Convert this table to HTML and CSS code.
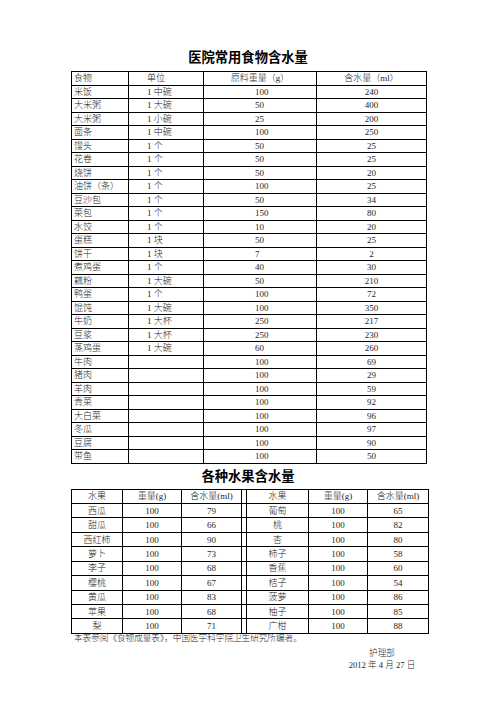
FILE: index.html
```html
<!DOCTYPE html>
<html lang="zh">
<head>
<meta charset="utf-8">
<link rel="stylesheet" href="styles.css">
</head>
<body>
<div class="page">
  <h1 class="title t1">医院常用食物含水量</h1>
  <table class="food">
    <colgroup><col class="c1"><col class="c2"><col class="c3"><col class="c4"></colgroup>
    <tr class="head"><td>食物</td><td class="unit">单位</td><td class="ctr">原料重量（g）</td><td class="ctr">含水量（ml）</td></tr>
    <tr><td>米饭</td><td class="unit">1 中碗</td><td class="raw">100</td><td class="ctr">240</td></tr>
    <tr><td>大米粥</td><td class="unit">1 大碗</td><td class="raw">50</td><td class="ctr">400</td></tr>
    <tr><td>大米粥</td><td class="unit">1 小碗</td><td class="raw">25</td><td class="ctr">200</td></tr>
    <tr><td>面条</td><td class="unit">1 中碗</td><td class="raw">100</td><td class="ctr">250</td></tr>
    <tr><td>馒头</td><td class="unit">1 个</td><td class="raw">50</td><td class="ctr">25</td></tr>
    <tr><td>花卷</td><td class="unit">1 个</td><td class="raw">50</td><td class="ctr">25</td></tr>
    <tr><td>烧饼</td><td class="unit">1 个</td><td class="raw">50</td><td class="ctr">20</td></tr>
    <tr><td>油饼（条）</td><td class="unit">1 个</td><td class="raw">100</td><td class="ctr">25</td></tr>
    <tr><td>豆沙包</td><td class="unit">1 个</td><td class="raw">50</td><td class="ctr">34</td></tr>
    <tr><td>菜包</td><td class="unit">1 个</td><td class="raw">150</td><td class="ctr">80</td></tr>
    <tr><td>水饺</td><td class="unit">1 个</td><td class="raw">10</td><td class="ctr">20</td></tr>
    <tr><td>蛋糕</td><td class="unit">1 块</td><td class="raw">50</td><td class="ctr">25</td></tr>
    <tr><td>饼干</td><td class="unit">1 块</td><td class="raw">7</td><td class="ctr">2</td></tr>
    <tr><td>煮鸡蛋</td><td class="unit">1 个</td><td class="raw">40</td><td class="ctr">30</td></tr>
    <tr><td>藕粉</td><td class="unit">1 大碗</td><td class="raw">50</td><td class="ctr">210</td></tr>
    <tr><td>鸭蛋</td><td class="unit">1 个</td><td class="raw">100</td><td class="ctr">72</td></tr>
    <tr><td>馄饨</td><td class="unit">1 大碗</td><td class="raw">100</td><td class="ctr">350</td></tr>
    <tr><td>牛奶</td><td class="unit">1 大杯</td><td class="raw">250</td><td class="ctr">217</td></tr>
    <tr><td>豆浆</td><td class="unit">1 大杯</td><td class="raw">250</td><td class="ctr">230</td></tr>
    <tr><td>蒸鸡蛋</td><td class="unit">1 大碗</td><td class="raw">60</td><td class="ctr">260</td></tr>
    <tr><td>牛肉</td><td class="unit"></td><td class="raw">100</td><td class="ctr">69</td></tr>
    <tr><td>猪肉</td><td class="unit"></td><td class="raw">100</td><td class="ctr">29</td></tr>
    <tr><td>羊肉</td><td class="unit"></td><td class="raw">100</td><td class="ctr">59</td></tr>
    <tr><td>青菜</td><td class="unit"></td><td class="raw">100</td><td class="ctr">92</td></tr>
    <tr><td>大白菜</td><td class="unit"></td><td class="raw">100</td><td class="ctr">96</td></tr>
    <tr><td>冬瓜</td><td class="unit"></td><td class="raw">100</td><td class="ctr">97</td></tr>
    <tr><td>豆腐</td><td class="unit"></td><td class="raw">100</td><td class="ctr">90</td></tr>
    <tr><td>带鱼</td><td class="unit"></td><td class="raw">100</td><td class="ctr">50</td></tr>
  </table>

  <h1 class="title t2">各种水果含水量</h1>
  <table class="fruit">
    <colgroup><col class="f1"><col class="f2"><col class="f3"><col class="fg"><col class="f4"><col class="f5"><col class="f6"></colgroup>
    <tr><td>水果</td><td>重量(g)</td><td>含水量(ml)</td><td></td><td>水果</td><td>重量(g)</td><td>含水量(ml)</td></tr>
    <tr><td>西瓜</td><td>100</td><td>79</td><td></td><td>葡萄</td><td>100</td><td>65</td></tr>
    <tr><td>甜瓜</td><td>100</td><td>66</td><td></td><td>桃</td><td>100</td><td>82</td></tr>
    <tr><td>西红柿</td><td>100</td><td>90</td><td></td><td>杏</td><td>100</td><td>80</td></tr>
    <tr><td>萝卜</td><td>100</td><td>73</td><td></td><td>柿子</td><td>100</td><td>58</td></tr>
    <tr><td>李子</td><td>100</td><td>68</td><td></td><td>香蕉</td><td>100</td><td>60</td></tr>
    <tr><td>樱桃</td><td>100</td><td>67</td><td></td><td>桔子</td><td>100</td><td>54</td></tr>
    <tr><td>黄瓜</td><td>100</td><td>83</td><td></td><td>菠萝</td><td>100</td><td>86</td></tr>
    <tr><td>苹果</td><td>100</td><td>68</td><td></td><td>柚子</td><td>100</td><td>85</td></tr>
    <tr><td>梨</td><td>100</td><td>71</td><td></td><td>广柑</td><td>100</td><td>88</td></tr>
  </table>

  <p class="note">本表参阅《食物成量表》，中国医学科学院卫生研究所编著。</p>
  <div class="sign">
    <div>护理部</div>
    <div>2012 年 4 月 27 日</div>
  </div>
</div>
</body>
</html>
```

FILE: styles.css
```css
html, body {
  margin: 0;
  padding: 0;
  background: #fff;
}

.page {
  width: 496px;
  height: 702px;
  padding-top: 49px;
  box-sizing: border-box;
  font-family: "Liberation Serif", "Noto Sans CJK SC", serif;
  font-weight: 300;
  font-size: 9px;
  color: #262626;
}

.title {
  margin: 0;
  font-family: "Noto Sans CJK SC", sans-serif;
  font-weight: 700;
  font-size: 13.3px;
  line-height: 16px;
  text-align: center;
  color: #000;
}

.t1 {
  margin-bottom: 6px;
}

.t2 {
  margin-top: 4px;
  margin-bottom: 5px;
}

table {
  border-collapse: collapse;
  table-layout: fixed;
  margin-left: 71px;
}

td {
  border: 1px solid #000;
  padding: 0;
  white-space: nowrap;
  overflow: hidden;
  line-height: 12px;
}

.food {
  width: 355px;
}

.food td {
  height: 12.5px;
  padding-left: 2px;
}

.food .c1 { width: 57px; }
.food .c2 { width: 75px; }
.food .c3 { width: 113px; }
.food .c4 { width: 110px; }

.food td.unit {
  padding-left: 18px;
}

.food td.raw {
  padding-left: 51px;
}

.food td.ctr {
  padding-left: 0;
  text-align: center;
}

.fruit {
  width: 357px;
}

.fruit td {
  height: 13.45px;
  text-align: center;
}

.fruit .f1 { width: 51px; }
.fruit .f2 { width: 59px; }
.fruit .f3 { width: 60px; }
.fruit .fg { width: 5px; }
.fruit .f4 { width: 62px; }
.fruit .f5 { width: 59px; }
.fruit .f6 { width: 61px; }

.note {
  margin: 0;
  padding-left: 74px;
  font-size: 8.6px;
  line-height: 9px;
}

.sign {
  width: 74px;
  margin-left: 345px;
  margin-top: 4px;
  font-size: 8.6px;
  line-height: 12px;
  text-align: center;
}
```
